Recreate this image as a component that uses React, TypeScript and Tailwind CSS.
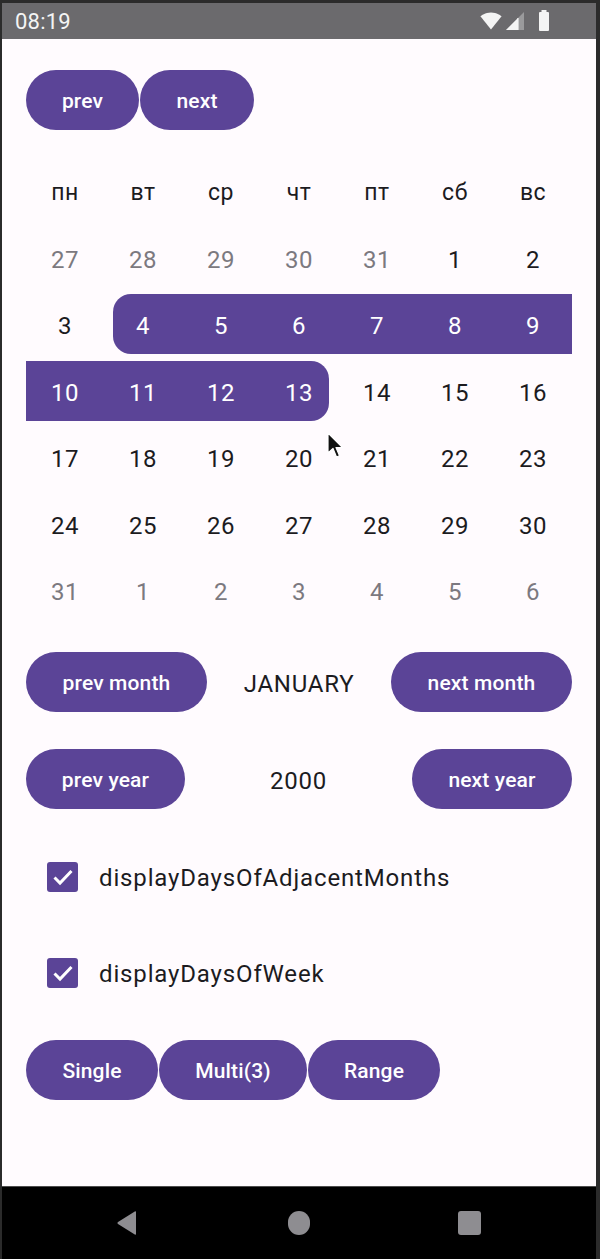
import React from 'react';

const purple = 'bg-[#5b4497]';

type Day = { n: number; muted?: boolean; sel?: 'start' | 'mid' | 'end' };

const weekDays = ['пн', 'вт', 'ср', 'чт', 'пт', 'сб', 'вс'];

const weeks: Day[][] = [
  [{ n: 27, muted: true }, { n: 28, muted: true }, { n: 29, muted: true }, { n: 30, muted: true }, { n: 31, muted: true }, { n: 1 }, { n: 2 }],
  [{ n: 3 }, { n: 4, sel: 'start' }, { n: 5, sel: 'mid' }, { n: 6, sel: 'mid' }, { n: 7, sel: 'mid' }, { n: 8, sel: 'mid' }, { n: 9, sel: 'mid' }],
  [{ n: 10, sel: 'mid' }, { n: 11, sel: 'mid' }, { n: 12, sel: 'mid' }, { n: 13, sel: 'end' }, { n: 14 }, { n: 15 }, { n: 16 }],
  [{ n: 17 }, { n: 18 }, { n: 19 }, { n: 20 }, { n: 21 }, { n: 22 }, { n: 23 }],
  [{ n: 24 }, { n: 25 }, { n: 26 }, { n: 27 }, { n: 28 }, { n: 29 }, { n: 30 }],
  [{ n: 31, muted: true }, { n: 1, muted: true }, { n: 2, muted: true }, { n: 3, muted: true }, { n: 4, muted: true }, { n: 5, muted: true }, { n: 6, muted: true }],
];

const Pill = ({ label, w }: { label: string; w: string }) => (
  <button className={`${purple} ${w} h-[60px] rounded-full text-white text-[21px] font-medium tracking-[0.15px] flex items-center justify-center pt-[4px] shrink-0`}>
    {label}
  </button>
);

const DayCell = ({ d }: { d: Day }) => {
  let bg = '';
  if (d.sel === 'start') bg = 'left-[9px] right-0 rounded-l-[18px]';
  if (d.sel === 'mid') bg = 'left-0 right-0';
  if (d.sel === 'end') bg = 'left-0 right-[9px] rounded-r-[18px]';
  const color = d.sel ? 'text-white' : d.muted ? 'text-[#7c7980]' : 'text-[#1c1b1f]';
  return (
    <div className="relative h-[60px] flex items-center justify-center">
      {d.sel && <div className={`absolute -top-[2px] bottom-[2px] ${purple} ${bg}`} />}
      <span className={`relative text-[24px] tracking-[0.5px] ${color}`}>{d.n}</span>
    </div>
  );
};

const Check = ({ label }: { label: string }) => (
  <div className="h-[72px] flex items-center pl-[21px] gap-[21px]">
    <div className={`${purple} w-[31px] h-[30px] rounded-[3px] flex items-center justify-center`}>
      <svg width="22" height="18" viewBox="0 0 22 18">
        <path d="M2.5 9.5 L8 15 L19.5 3" fill="none" stroke="white" strokeWidth="3" />
      </svg>
    </div>
    <span className="text-[24px] tracking-[0.85px] text-[#1c1b1f] pt-[2px]">{label}</span>
  </div>
);

const StatusBar = () => (
  <div className="h-[36px] bg-[#6b6a6d] flex items-center justify-between pl-[13px] pr-[42px]">
    <span className="text-[22px] text-[#f4f4f4] tracking-[0.2px]">08:19</span>
    <div className="flex items-center gap-[3px]">
      <svg width="22" height="18" viewBox="0 0 22 18">
        <path d="M11 17.5 L21.6 4.3 C20.8 3.6 16.8 0.5 11 0.5 S1.2 3.6 0.4 4.3 Z" fill="#f4f4f4" />
      </svg>
      <svg width="20" height="20" viewBox="0 0 20 20">
        <path d="M1 19 H19 V1 Z" fill="#f4f4f4" fillOpacity="0.35" />
        <path d="M1 19 H13 V7 Z" fill="#f4f4f4" />
        <path d="M13 7 V19" stroke="#f4f4f4" strokeWidth="1.2" />
      </svg>
      <svg width="20" height="22" viewBox="0 0 20 22" className="ml-[6px]">
        <rect x="7.5" y="0" width="5" height="3" fill="#f4f4f4" />
        <rect x="5" y="2" width="10" height="19" rx="1" fill="#f4f4f4" />
      </svg>
    </div>
  </div>
);

const NavBar = () => (
  <div className="h-[73px] bg-black border-t border-[#4d4d4d] flex items-center justify-between pl-[113px] pr-[115px]">
    <svg width="24" height="26" viewBox="0 0 24 26">
      <path d="M21 2 L21 24 C21 24.8 20.4 25 19.8 24.6 L3 14 C2.3 13.5 2.3 12.5 3 12 L19.8 1.4 C20.4 1 21 1.2 21 2 Z" fill="#8e8d91" />
    </svg>
    <div className="w-[22px] h-[24px] rounded-full bg-[#8e8d91]" />
    <div className="w-[23px] h-[24px] rounded-[3px] bg-[#8e8d91]" />
  </div>
);

export default function App() {
  return (
    <div className="relative w-[600px] h-[1259px] bg-[#2b2b2b] pt-[3px] pl-[2px] pr-[4px] flex flex-col overflow-hidden font-['Roboto',sans-serif]">
      <StatusBar />
      <main className="flex-1 bg-[#fffbfe] px-[24px] flex flex-col">
        <div className="mt-[31px] flex gap-[1px]">
          <Pill label="prev" w="w-[113px]" />
          <Pill label="next" w="w-[114px]" />
        </div>

        <div className="mt-[33px] grid grid-cols-7 gap-y-[6.5px]">
          {weekDays.map((w) => (
            <div key={w} className="h-[60px] flex items-center justify-center text-[23px] text-[#1c1b1f] tracking-[0.5px]">
              {w}
            </div>
          ))}
          {weeks.flat().map((d, i) => (
            <DayCell key={i} d={d} />
          ))}
        </div>

        <div className="mt-[30px] flex items-center justify-between">
          <Pill label="prev month" w="w-[181px]" />
          <span className="text-[24px] tracking-[0.75px] text-[#1c1b1f] pt-[3px]">JANUARY</span>
          <Pill label="next month" w="w-[181px]" />
        </div>

        <div className="mt-[37px] flex items-center justify-between">
          <Pill label="prev year" w="w-[159px]" />
          <span className="text-[24px] tracking-[0.75px] text-[#1c1b1f] pt-[3px]">2000</span>
          <Pill label="next year" w="w-[160px]" />
        </div>

        <div className="mt-[32px] flex flex-col gap-[24px]">
          <Check label="displayDaysOfAdjacentMonths" />
          <Check label="displayDaysOfWeek" />
        </div>

        <div className="mt-[31px] flex gap-[1px]">
          <Pill label="Single" w="w-[132px]" />
          <Pill label="Multi(3)" w="w-[148px]" />
          <Pill label="Range" w="w-[132px]" />
        </div>
      </main>
      <NavBar />

      <svg className="absolute left-[327px] top-[432px]" width="18" height="28" viewBox="0 0 18 28">
        <path d="M1 1 L1 21 L6 16.5 L9.5 25 L12.5 23.7 L9 15.5 L15.5 15.5 Z" fill="#111" stroke="white" strokeWidth="1.2" strokeLinejoin="round" />
      </svg>
    </div>
  );
}
